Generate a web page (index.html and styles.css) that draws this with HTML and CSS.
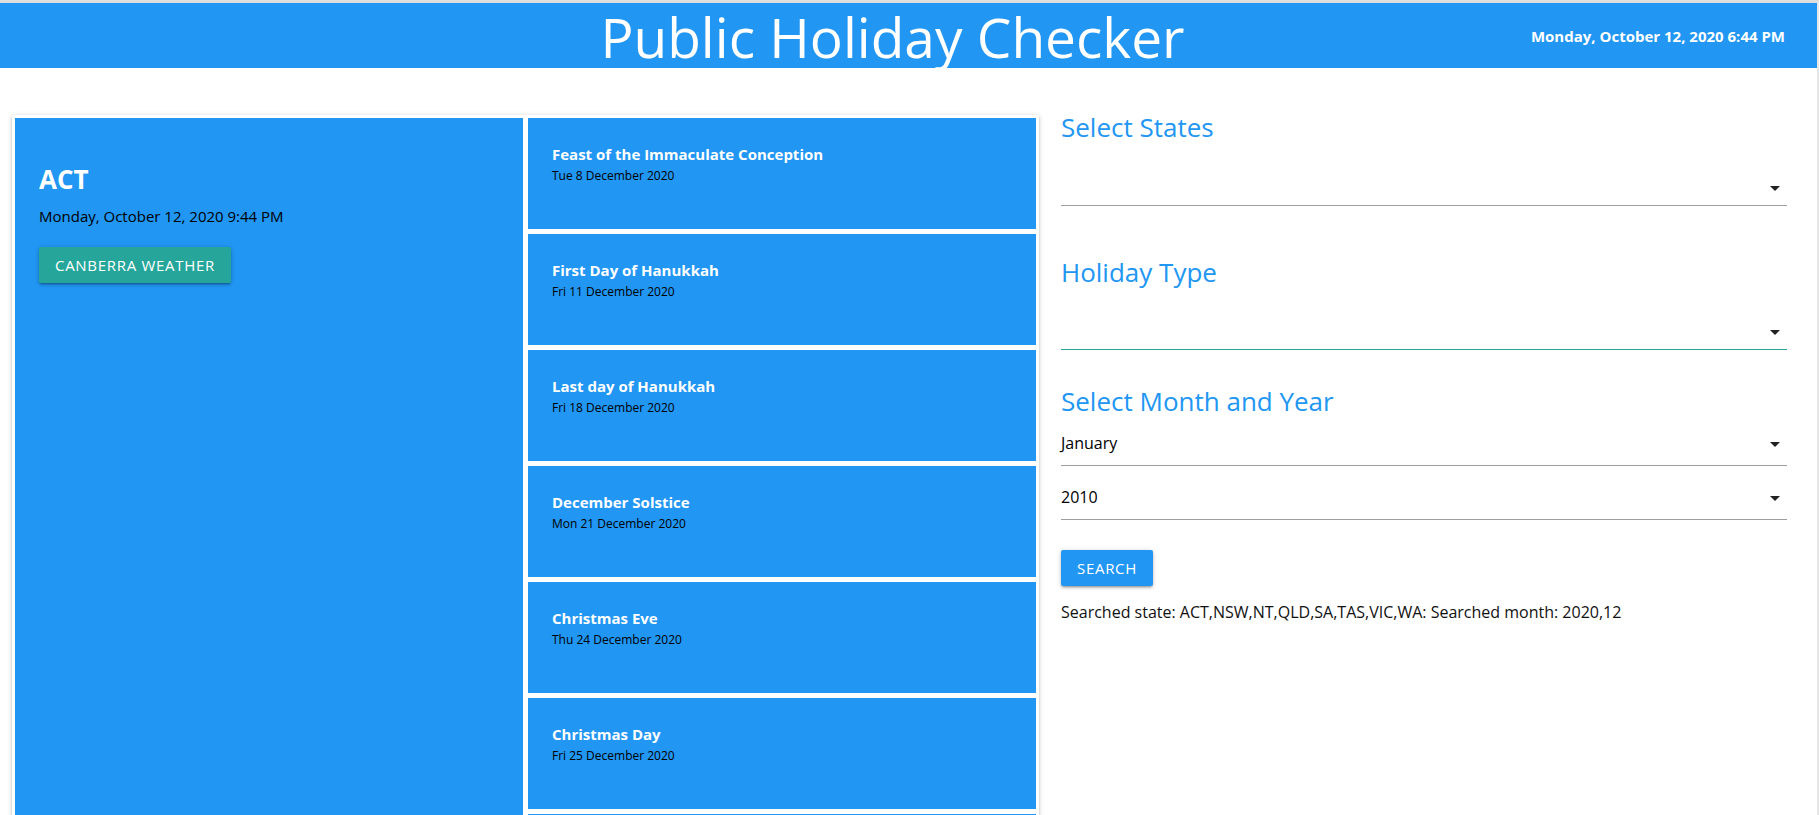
FILE: index.html
```html
<!DOCTYPE html>
<html lang="en">
<head>
<meta charset="utf-8">
<title>Public Holiday Checker</title>
<link rel="stylesheet" href="styles.css">
</head>
<body>
<div class="page">
  <header class="topbar">
    <div class="topbar-side"></div>
    <h1 class="title">Public Holiday Checker</h1>
    <div class="now">Monday, October 12, 2020 6:44 PM</div>
  </header>

  <main class="main">
    <section class="board">
      <div class="state-card">
        <h2 class="state-name">ACT</h2>
        <p class="state-time">Monday, October 12, 2020 9:44 PM</p>
        <button class="btn btn-teal" type="button">Canberra Weather</button>
      </div>

      <div class="holidays">
        <div class="holiday">
          <div class="holiday-name">Feast of the Immaculate Conception</div>
          <div class="holiday-date">Tue 8 December 2020</div>
        </div>
        <div class="holiday">
          <div class="holiday-name">First Day of Hanukkah</div>
          <div class="holiday-date">Fri 11 December 2020</div>
        </div>
        <div class="holiday">
          <div class="holiday-name">Last day of Hanukkah</div>
          <div class="holiday-date">Fri 18 December 2020</div>
        </div>
        <div class="holiday">
          <div class="holiday-name">December Solstice</div>
          <div class="holiday-date">Mon 21 December 2020</div>
        </div>
        <div class="holiday">
          <div class="holiday-name">Christmas Eve</div>
          <div class="holiday-date">Thu 24 December 2020</div>
        </div>
        <div class="holiday">
          <div class="holiday-name">Christmas Day</div>
          <div class="holiday-date">Fri 25 December 2020</div>
        </div>
        <div class="holiday">
          <div class="holiday-name">Boxing Day</div>
          <div class="holiday-date">Sat 26 December 2020</div>
        </div>
      </div>
    </section>

    <section class="filters">
      <h3 class="filter-title ft-states">Select States</h3>
      <div class="select sel-states">
        <span class="select-value"></span>
        <svg class="caret" width="10" height="5" viewBox="0 0 10 5"><path d="M0 0h10L5 5z"/></svg>
      </div>

      <h3 class="filter-title ft-type">Holiday Type</h3>
      <div class="select sel-type is-focused">
        <span class="select-value"></span>
        <svg class="caret" width="10" height="5" viewBox="0 0 10 5"><path d="M0 0h10L5 5z"/></svg>
      </div>

      <h3 class="filter-title ft-month">Select Month and Year</h3>
      <div class="select sel-month">
        <span class="select-value">January</span>
        <svg class="caret" width="10" height="5" viewBox="0 0 10 5"><path d="M0 0h10L5 5z"/></svg>
      </div>
      <div class="select sel-year">
        <span class="select-value">2010</span>
        <svg class="caret" width="10" height="5" viewBox="0 0 10 5"><path d="M0 0h10L5 5z"/></svg>
      </div>

      <div class="search-row">
        <button class="btn btn-blue" type="button">Search</button>
      </div>
      <p class="searched">Searched state: ACT,NSW,NT,QLD,SA,TAS,VIC,WA: Searched month: 2020,12</p>
    </section>
  </main>
</div>
</body>
</html>
```

FILE: styles.css
```css
html, body {
  margin: 0;
  padding: 0;
  height: 100%;
  overflow: hidden;
  background: #ffffff;
}

body {
  font-family: "Open Sans", "Noto Sans", sans-serif;
  color: #000;
}

.page {
  box-sizing: border-box;
  height: 100vh;
  border-top: 3px solid #dedede;
  border-right: 2px solid #e6e6e6;
  overflow: hidden;
}

/* ---------- top bar ---------- */
.topbar {
  display: grid;
  grid-template-columns: 1fr auto 1fr;
  align-items: center;
  height: 65px;
  background: #2196f3;
  padding-right: 32px;
}

.title {
  margin: 0;
  padding-top: 1px;
  font-weight: 400;
  font-size: 55px;
  line-height: 65px;
  color: #ffffff;
  white-space: nowrap;
}

.now {
  justify-self: end;
  font-weight: 700;
  font-size: 15px;
  line-height: 20px;
  color: #ffffff;
  white-space: nowrap;
}

/* ---------- main ---------- */
.main {
  display: flex;
  align-items: flex-start;
  gap: 22px;
  padding: 44px 0 0 12px;
}

.board {
  flex: none;
  display: flex;
  gap: 5px;
  width: 1027px;
  box-sizing: border-box;
  margin-top: 3px;
  padding: 3px;
  background: #ffffff;
  box-shadow: 0 2px 2px 0 rgba(0,0,0,.14), 0 3px 1px -2px rgba(0,0,0,.12), 0 1px 5px 0 rgba(0,0,0,.2);
}

.state-card {
  flex: none;
  width: 508px;
  box-sizing: border-box;
  padding: 45px 24px 24px 24px;
  background: #2196f3;
}

.state-name {
  margin: 0;
  font-weight: 700;
  font-size: 26px;
  line-height: 32px;
  color: #ffffff;
}

.state-time {
  margin: 10px 0 0 0;
  font-size: 15px;
  line-height: 22px;
  color: #000;
}

.btn {
  display: inline-block;
  height: 36px;
  border: none;
  border-radius: 2px;
  padding: 0 16px;
  font-family: inherit;
  font-size: 15px;
  letter-spacing: .7px;
  line-height: 36px;
  text-transform: uppercase;
  color: #ffffff;
  box-shadow: 0 2px 2px 0 rgba(0,0,0,.14), 0 3px 1px -2px rgba(0,0,0,.12), 0 1px 5px 0 rgba(0,0,0,.2);
  cursor: pointer;
}

.btn-teal {
  margin-top: 20px;
  background: #26a69a;
}

.btn-blue {
  background: #2196f3;
}

.holidays {
  flex: none;
  width: 508px;
  display: flex;
  flex-direction: column;
  gap: 5px;
}

.holiday {
  box-sizing: border-box;
  height: 111px;
  padding: 26px 24px 0 24px;
  background: #2196f3;
}

.holiday-name {
  font-weight: 700;
  font-size: 15px;
  line-height: 21px;
  color: #ffffff;
}

.holiday-date {
  margin-top: 3px;
  font-size: 12px;
  line-height: 16px;
  color: #000;
}

/* ---------- filters ---------- */
.filters {
  flex: none;
  width: 726px;
  display: flex;
  flex-direction: column;
}

.filter-title {
  margin: 0;
  font-weight: 400;
  font-size: 26px;
  line-height: 30px;
  color: #2196f3;
}

.ft-type { margin-top: 51px; }
.ft-month { margin-top: 36px; }

.select {
  display: flex;
  align-items: center;
  justify-content: space-between;
  border-bottom: 1px solid #9e9e9e;
  padding-right: 7px;
}

.select.is-focused {
  border-bottom-color: #26a69a;
}

.sel-states { height: 34px; margin-top: 29px; }
.sel-type { height: 34px; margin-top: 28px; }
.sel-month { height: 42px; margin-top: 7px; }
.sel-year { height: 42px; margin-top: 11px; }

.select-value {
  padding-bottom: 3px;
  font-size: 16px;
  line-height: 22px;
  color: #000;
}

.caret {
  display: block;
  fill: #222;
}

.search-row {
  margin-top: 30px;
}

.searched {
  margin: 15px 0 0 0;
  font-size: 16px;
  line-height: 22px;
  color: #111;
}
```
